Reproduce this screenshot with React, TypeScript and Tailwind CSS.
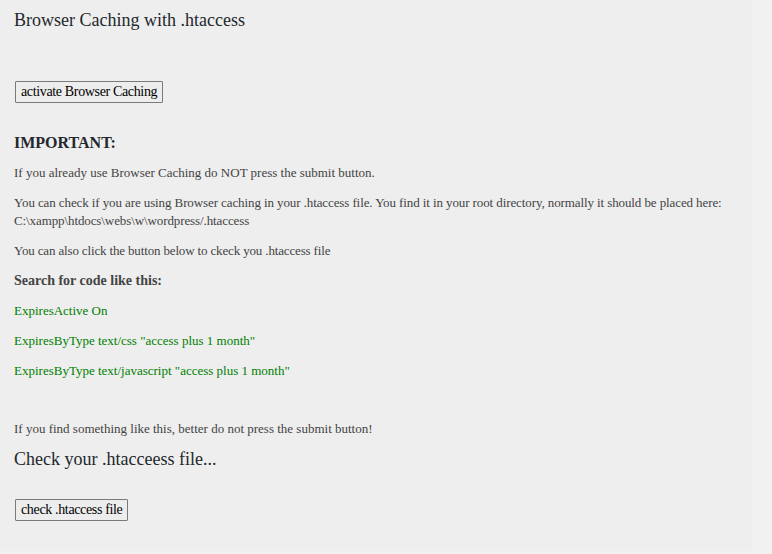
import React from 'react';

const serif = { fontFamily: '"Liberation Serif", "DejaVu Serif", serif' };

const Btn: React.FC<{ label: string }> = ({ label }) => (
    <button
        type="button"
        className="h-[22px] px-[5px] border border-[#7a7a7a] bg-[#ededed] text-[14px] tracking-[-0.35px] leading-none text-black rounded-[1px]"
        style={serif}
    >
        {label}
    </button>
);

const App: React.FC = () => {
    const codeLines = [
        'ExpiresActive On',
        'ExpiresByType text/css "access plus 1 month"',
        'ExpiresByType text/javascript "access plus 1 month"',
    ];

    return (
        <div className="w-[772px] h-[554px] bg-[#f1f1f1] overflow-hidden" style={serif}>
            <div className="w-[752px] h-[551px] bg-[#eeeeee] pl-[14px] pt-[10px] text-[#444] text-[13px]">
                <h2 className="text-[18px] leading-[20px] text-[#23282d]">Browser Caching with .htaccess</h2>

                <div className="mt-[51px] pl-px">
                    <Btn label="activate Browser Caching" />
                </div>

                <h3 className="mt-[31px] text-[16px] font-bold leading-[18px] text-[#23282d]">IMPORTANT:</h3>
                <p className="mt-[12px] leading-[18px]">If you already use Browser Caching do NOT press the submit button.</p>
                <p className="mt-[12px] leading-[18px] tracking-[-0.1px]">
                    You can check if you are using Browser caching in your .htaccess file. You find it in your root directory, normally it should be placed here:
                    <br />
                    C:\xampp\htdocs\webs\w\wordpress/.htaccess
                </p>
                <p className="mt-[12px] leading-[18px] tracking-[-0.15px]">You can also click the button below to ckeck you .htaccess file</p>
                <p className="mt-[12px] leading-[18px] font-bold text-[14px]">Search for code like this:</p>
                {codeLines.map((l) => (
                    <p key={l} className="mt-[12px] leading-[18px] text-[#008000]">{l}</p>
                ))}

                <p className="mt-[40px] leading-[18px]">If you find something like this, better do not press the submit button!</p>
                <h2 className="mt-[10px] text-[18px] leading-[22px] text-[#23282d]">Check your .htacceess file...</h2>

                <div className="mt-[29px] pl-px">
                    <Btn label="check .htaccess file" />
                </div>
            </div>
        </div>
    );
};

export default App;
